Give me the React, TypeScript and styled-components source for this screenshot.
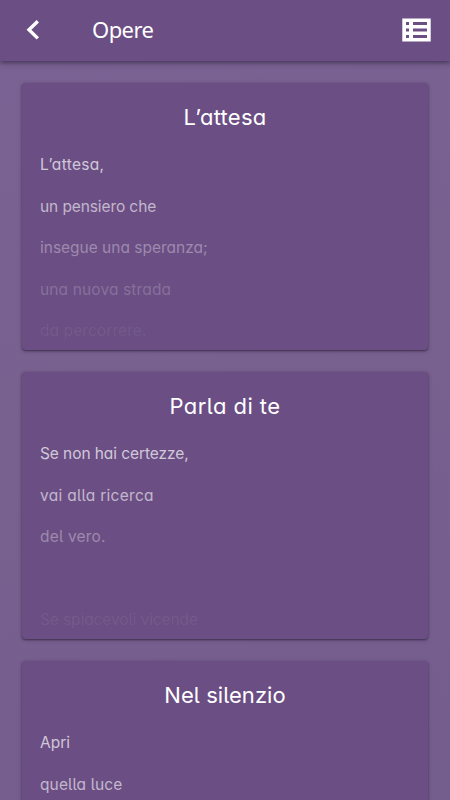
import React from "react";
import styled, { createGlobalStyle } from "styled-components";

const GlobalStyle = createGlobalStyle`
  * { box-sizing: border-box; }
  body {
    margin: 0;
    background: #765f90;
    font-family: Inter, "Noto Sans", sans-serif;
    font-feature-settings: "cv11", "cv05";
  }
`;

const Screen = styled.div`
  height: 800px;
  overflow: hidden;
  display: flex;
  flex-direction: column;
  background: linear-gradient(160deg, #7a6394 0%, #78608f 50%, #745e8e 100%);
`;

const AppBar = styled.header`
  flex: none;
  height: 61px;
  display: flex;
  align-items: center;
  padding: 0 19px 1px 26px;
  background: #6b4e84;
  box-shadow: 0 2px 4px rgba(48, 36, 62, 0.55), 0 2px 7px rgba(48, 36, 62, 0.2);
`;

const BarTitle = styled.h1`
  flex: 1;
  margin: 0 0 2px 52px;
  color: #fff;
  font-family: "Noto Sans", sans-serif;
  font-size: 22px;
  font-weight: 400;
  line-height: 28px;
  letter-spacing: -0.55px;
`;

const IconButton = styled.button`
  display: flex;
  padding: 0;
  border: 0;
  background: none;
  color: #fff;
`;

const Feed = styled.main`
  display: flex;
  flex-direction: column;
  gap: 22px;
  padding: 22px 22px 0;
`;

const Card = styled.article`
  flex: none;
  height: 267px;
  overflow: hidden;
  padding: 20px 18px 0;
  border-radius: 4px;
  background: #6b4e84;
  box-shadow: 0 1px 2px rgba(38, 26, 52, 0.6), 0 1px 4px rgba(48, 36, 62, 0.3);
`;

const CardTitle = styled.h2<{ $tracking: number }>`
  margin: 0 0 13px;
  color: #fff;
  font-size: 22px;
  font-weight: 400;
  line-height: 28px;
  text-align: center;
  letter-spacing: ${(p) => p.$tracking}px;
`;

const Verse = styled.p<{ $opacity: number; $tracking: number }>`
  height: 41.6px;
  margin: 0;
  color: rgba(255, 255, 255, ${(p) => p.$opacity});
  font-size: 15.5px;
  line-height: 41.6px;
  white-space: nowrap;
  letter-spacing: ${(p) => p.$tracking}px;
`;

type Line = { text: string; tracking: number };
type Poem = { title: string; tracking: number; lines: Line[] };

const poems: Poem[] = [
  {
    title: "L’attesa",
    tracking: 0.25,
    lines: [
      { text: "L’attesa,", tracking: 0.32 },
      { text: "un pensiero che", tracking: -0.1 },
      { text: "insegue una speranza;", tracking: -0.01 },
      { text: "una nuova strada", tracking: 0.13 },
      { text: "da percorrere.", tracking: 0.08 },
    ],
  },
  {
    title: "Parla di te",
    tracking: 0.45,
    lines: [
      { text: "Se non hai certezze,", tracking: -0.08 },
      { text: "vai alla ricerca", tracking: 0.28 },
      { text: "del vero.", tracking: 0.18 },
      { text: "", tracking: 0 },
      { text: "Se spiacevoli vicende", tracking: -0.1 },
    ],
  },
  {
    title: "Nel silenzio",
    tracking: 0.05,
    lines: [
      { text: "Apri", tracking: 0.03 },
      { text: "quella luce", tracking: 0.12 },
    ],
  },
];

const fade = [0.7, 0.6, 0.35, 0.2, 0.07];

export default function App() {
  return (
    <>
      <GlobalStyle />
      <Screen>
        <AppBar>
          <IconButton aria-label="Indietro">
            <svg width="14" height="22" viewBox="0 0 14 22" fill="none" stroke="currentColor" strokeWidth="3.4">
              <path d="M11.8 2.2 3 10.8l8.8 8.6" />
            </svg>
          </IconButton>
          <BarTitle>Opere</BarTitle>
          <IconButton aria-label="Elenco">
            <svg width="29" height="24" viewBox="0 0 29 24">
              <path
                fill="currentColor"
                fillRule="evenodd"
                d="M.3.4H28.7v23.2H.3zM4 4v3h3V4zm7 0v3h14V4zM4 10.5v3h3v-3zm7 0v3h14v-3zM4 17v3h3v-3zm7 0v3h14v-3z"
              />
            </svg>
          </IconButton>
        </AppBar>
        <Feed>
          {poems.map((poem) => (
            <Card key={poem.title}>
              <CardTitle $tracking={poem.tracking}>{poem.title}</CardTitle>
              {poem.lines.map((line, i) => (
                <Verse key={i} $opacity={fade[i]} $tracking={line.tracking}>
                  {line.text}
                </Verse>
              ))}
            </Card>
          ))}
        </Feed>
      </Screen>
    </>
  );
}
